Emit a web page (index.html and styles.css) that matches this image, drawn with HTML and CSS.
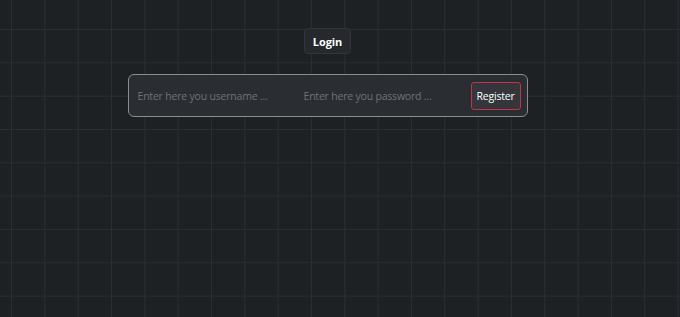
FILE: index.html
```html
<!DOCTYPE html>
<html lang="en">
<head>
<meta charset="utf-8">
<title>Login</title>
<link rel="stylesheet" href="styles.css">
</head>
<body>
<main class="page">
  <button class="login-btn" type="button">Login</button>
  <form class="form-box">
    <input class="field" type="text" placeholder="Enter here you username ...">
    <input class="field" type="password" placeholder="Enter here you password ...">
    <button class="register-btn" type="button">Register</button>
  </form>
</main>
</body>
</html>
```

FILE: styles.css
```css
html, body {
  margin: 0;
  padding: 0;
  height: 100%;
}
body {
  background-color: #1e2124;
  background-image:
    linear-gradient(to right, #2a2e32 1px, transparent 1px),
    linear-gradient(to bottom, #2a2e32 1px, transparent 1px);
  background-size: 33.33px 33.33px;
  background-position: 11px 29px;
  font-family: "Open Sans", "Noto Sans", sans-serif;
}
.page {
  width: 655px;
  display: flex;
  flex-direction: column;
  align-items: center;
  padding-top: 28px;
  gap: 20px;
}
.login-btn {
  height: 26px;
  padding: 0 8px;
  background: #25282c;
  border: 1px solid #32353a;
  border-radius: 4px;
  color: #ffffff;
  font-family: inherit;
  font-weight: 700;
  font-size: 11px;
  letter-spacing: -0.1px;
  cursor: pointer;
}
.form-box {
  box-sizing: border-box;
  width: 400px;
  height: 43px;
  margin: 0;
  display: flex;
  align-items: center;
  background: #2a2d32;
  border: 1px solid #8a8c8f;
  border-radius: 6px;
  padding: 0 6px 0 0;
}
.field {
  box-sizing: border-box;
  width: 166px;
  height: 100%;
  background: transparent;
  border: none;
  outline: none;
  padding: 0 0 0 9px;
  color: #d0d0d0;
  font-family: inherit;
  font-size: 10.5px;
  letter-spacing: -0.2px;
}
.field::placeholder {
  color: #6f7377;
}
.register-btn {
  margin-left: auto;
  width: 50px;
  height: 28px;
  padding: 0;
  background: #34363b;
  border: 1px solid #c43349;
  border-radius: 3px;
  color: #ffffff;
  font-family: inherit;
  font-size: 10.5px;
  letter-spacing: -0.2px;
  cursor: pointer;
}
```
